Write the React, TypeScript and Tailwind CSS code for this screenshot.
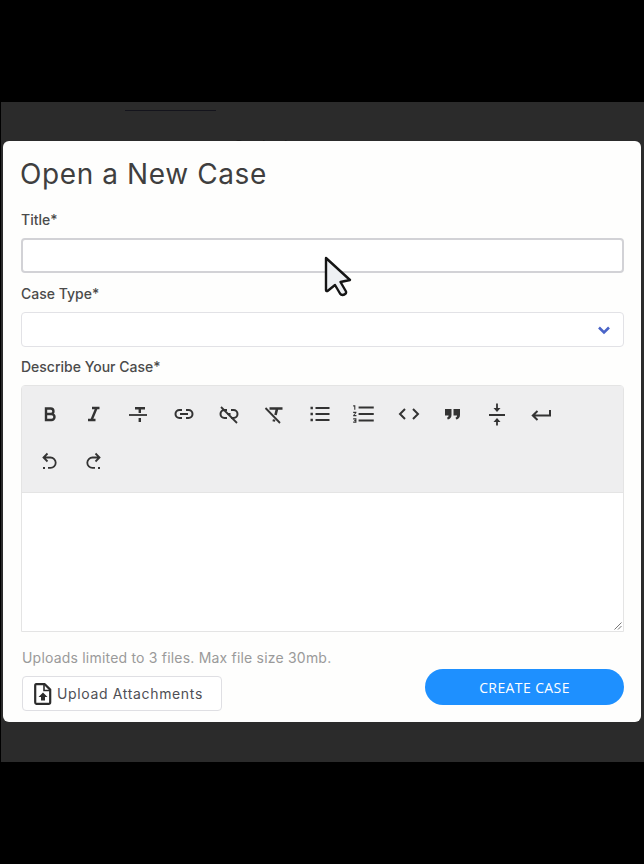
import React from 'react';
import { MdFormatListNumbered } from 'react-icons/md';

const Glyph = ({ children }: { children: React.ReactNode }) => (
  <svg width="24" height="24" viewBox="0 0 24 24" fill="none" stroke="#333333" strokeWidth="2">
    {children}
  </svg>
);

const linkPath = 'M10 8H7.5a4 4 0 0 0 0 8H10 M14 8h2.5a4 4 0 0 1 0 8H14 M8 12h8';
const undoPath = 'M9.5 4.5 L5.5 8.5 L9.5 12.5 M6 8.5h6.5a5.2 5.2 0 0 1 0 10.4H10 M5 19h2';

const tools = [
  <Glyph><path strokeWidth="2.4" d="M8 6.5h4.7a2.75 2.75 0 0 1 0 5.5H8z M8 12h5.5a3 3 0 0 1 0 6H8z" /></Glyph>,
  <Glyph><path strokeWidth="2.4" d="M9 6H16.5 M5 18h7.5 M13.5 6l-5 12" /></Glyph>,
  <Glyph>
    <path strokeWidth="1.8" d="M1 13h18" />
    <path strokeWidth="2.4" d="M7 6.2h10 M11.8 6v5 M11.8 16v4" />
  </Glyph>,
  <Glyph><path d={linkPath} /></Glyph>,
  <Glyph>
    <path d="M10 8H7.5a4 4 0 0 0 0 8H10 M14 8h2.5a4 4 0 0 1 0 8H14 M10.5 12h3" />
    <path strokeWidth="1.8" d="M4 5l16 16" />
  </Glyph>,
  <Glyph>
    <path strokeWidth="2.6" d="M7.5 6.5h13 M15 7l-1.5 6" />
    <path strokeWidth="1.8" d="M3.5 6l14.5 15" />
    <path strokeWidth="2.6" d="M12.2 17.5l-.5 2" />
  </Glyph>,
  <Glyph>
    <path d="M9.5 6h14 M9.5 12h14 M9.5 18h14" />
    <path strokeWidth="2.6" d="M4.5 6h2.4 M4.5 12h2.4 M4.5 18h2.4" />
  </Glyph>,
  <span className="ml-[3px]"><MdFormatListNumbered size={26} color="#333333" /></span>,
  <span className="ml-[3px]"><Glyph><path d="M8 7l-5 5 5 5 M16 7l5 5-5 5" /></Glyph></span>,
  <Glyph>
    <path
      fill="#333333"
      stroke="none"
      d="M5 7h6.5v6c0 2.5-1.5 4-3.7 4.5L7 15.7c1-.4 1.5-1 1.6-2.2H5z M13.5 7H20v6c0 2.5-1.5 4-3.7 4.5l-.8-1.8c1-.4 1.5-1 1.6-2.2h-3.6z"
    />
  </Glyph>,
  <Glyph>
    <path strokeWidth="1.8" d="M4 13h16 M12 1.5v5 M12 19v4.5" />
    <path fill="#333333" stroke="none" d="M8.5 6h7L12 10z M8.5 20h7L12 16z" />
  </Glyph>,
  <Glyph><path d="M21 8v5.5H4 M8.5 9l-4.7 4.5L8.5 18" /></Glyph>,
  <Glyph><path strokeWidth="1.8" d={undoPath} /></Glyph>,
  <span className="-ml-[3px]"><Glyph><path strokeWidth="1.8" transform="matrix(-1 0 0 1 24 0)" d={undoPath} /></Glyph></span>,
];

const labelClass = "block text-[14px] leading-[18px] font-medium text-[#4b4b4b]";

export default function App() {
  return (
    <div className="h-[864px] bg-black pt-[102px] font-['Inter',sans-serif] overflow-hidden">
      <div className="relative h-[660px] ml-px bg-[#2b2b2b]">
        {/* Page behind the modal */}
        <div className="h-[39px] overflow-hidden relative">
          <div className="absolute left-[124px] top-[8px] w-[91px] h-px bg-[#14141c]" />
          <span className="absolute left-[232px] top-[33px] text-[15px] text-[#1e1e1e]">Contact</span>
        </div>

        {/* Modal */}
        <div className="relative ml-[2px] mr-[3px] h-[581px] bg-[#fefefd] rounded-[6px] pl-[18px] pr-[17px]">
          <h1 className="pt-[13px] h-[59px] text-[28px] leading-[40px] tracking-[0.6px] -ml-px text-[#3f3f3f] font-normal">
            Open a New Case
          </h1>

          <label className={`${labelClass} h-[38px] pt-[11px]`}>Title*</label>
          <input className="block w-[603px] h-[35px] bg-white border-2 border-[#d2d2d6] rounded-[4px] outline-none" />

          <label className={`${labelClass} h-[39px] pt-[12px]`}>Case Type*</label>
          <div className="flex items-center justify-end w-[603px] h-[35px] bg-white border border-[#e2e2e6] rounded-[4px] pr-[12px]">
            <svg width="14" height="10" viewBox="0 0 14 10" fill="none">
              <path d="M2 2.5 L7 7.5 L12 2.5" stroke="#4a64c8" strokeWidth="2.6" />
            </svg>
          </div>

          <label className={`${labelClass} h-[38px] pt-[11px]`}>Describe Your Case*</label>
          <div className="w-[603px] h-[247px] border border-[#e4e4e4] rounded-t-[4px] flex flex-col">
            <div className="h-[107px] bg-[#eeeeef] pl-[6px] pr-[50px] pt-[4px] flex flex-wrap content-start border-b border-[#e4e4e4]">
              {tools.map((icon, i) => (
                <div key={i} className="w-[44.65px] h-[47px] flex items-center justify-center">
                  {icon}
                </div>
              ))}
            </div>
            <div className="relative flex-1 bg-white">
              <svg className="absolute right-[1px] bottom-[1px]" width="8" height="8" viewBox="0 0 8 8" stroke="#777777" strokeWidth="1" fill="none">
                <path d="M0.5 7.5 L7.5 0.5 M4 7.5 L7.5 4" />
              </svg>
            </div>
          </div>

          <div className="flex justify-between mt-[17px]">
            <div className="pl-px">
              <p className="text-[14px] leading-[18px] text-[#9a9a9a] tracking-[0.2px]">Uploads limited to 3 files. Max file size 30mb.</p>
              <button className="flex items-center mt-[9px] w-[200px] h-[35px] bg-white border border-[#dfdfe3] rounded-[4px] pl-[11px] text-[14px] tracking-[0.65px] text-[#4f4f55]">
                <svg className="mr-[5px]" width="18" height="22" viewBox="0 0 18 22" fill="none">
                  <path d="M2.2 1.2h8.6l5.4 5.4v12.6q0 1.6-1.6 1.6H2.2q-1 0-1-1.6V2.8q0-1.6 1-1.6z" stroke="#2c2c2c" strokeWidth="2.2" strokeLinejoin="round" />
                  <path d="M10 2v5.5h6" stroke="#2c2c2c" strokeWidth="1.6" />
                  <path d="M9 9.5l4.5 4.5H11v3.5H7V14H4.5z" fill="#2c2c2c" />
                </svg>
                Upload Attachments
              </button>
            </div>
            <button className="self-end w-[199px] h-[36px] mb-[6px] rounded-full bg-[#1e90ff] text-white text-[14px] tracking-[0.4px] font-['Open_Sans',sans-serif] font-medium">
              CREATE CASE
            </button>
          </div>
        </div>

        {/* Mouse pointer over the dialog */}
        <svg className="absolute left-[322px] top-[153px]" width="30" height="42" viewBox="0 0 30 42" fill="none">
          <path
            d="M3 3 L27 25 L17.5 27 L23 36.5 Q23.5 38.5 21.5 39.5 L19.5 40 Q18 40 17 38.5 L12 30 L4.5 36 Q3 36.5 3 35 Z"
            fill="#eef0f3"
            stroke="#151515"
            strokeWidth="2.4"
            strokeLinejoin="round"
          />
        </svg>
      </div>
    </div>
  );
}
